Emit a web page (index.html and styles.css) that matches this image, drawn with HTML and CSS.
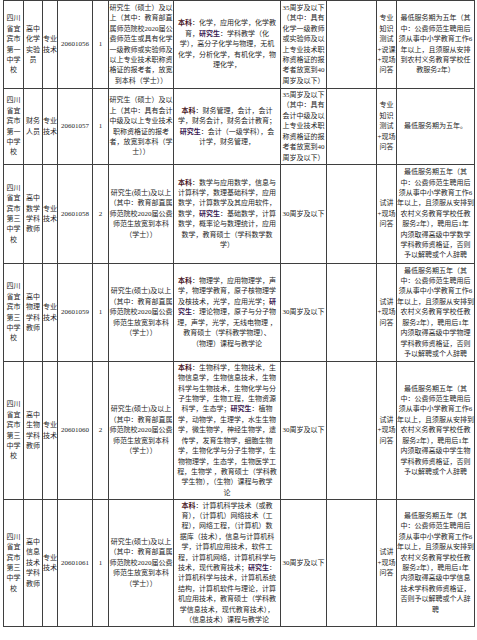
FILE: index.html
```html
<!DOCTYPE html>
<html lang="zh-CN">
<head>
<meta charset="utf-8">
<title>招聘岗位表</title>
<link rel="stylesheet" href="styles.css">
</head>
<body>
<table class="sheet">
<colgroup>
<col class="c-unit"><col class="c-post"><col class="c-type"><col class="c-code"><col class="c-num"><col class="c-edu"><col class="c-major"><col class="c-age"><col class="c-other"><col class="c-exam"><col class="c-note">
</colgroup>
<tbody>
<tr class="r1">
<td>四川<br>省宜<br>宾市<br>第一<br>中学<br>校</td>
<td>高中<br>化学<br>实验<br>员</td>
<td>专业<br>技术</td>
<td>20601056</td>
<td>1</td>
<td>研究生（硕士）及以<br>上（其中：教育部直<br>属师范院校2020届公<br>费师范生或具有化学<br>一级教师或实验师及<br>以上专业技术职称资<br>格证的报考者，放宽<br>到本科（学士））</td>
<td><b class="bk">本科</b>：化学，应用化学，化学教<br>育，<b class="yjs">研究生</b>：学科教学（化<br>学），高分子化学与物理，无机<br>化学，分析化学，有机化学，物<br>理化学，</td>
<td class="age">35周岁及以下<br>（其中：具有<br>化学一级教师<br>或实验师及以<br>上专业技术职<br>称资格证的报<br>考者放宽到40<br>周岁及以下）</td>
<td></td>
<td>专业<br>知识<br>测试<br>+说课<br>+现场<br>问答</td>
<td>最低服务期为五年（其<br>中：公费师范生聘用后<br>须从事中小学教育工作6<br>年以上，且须服从安排<br>到农村义务教育学校任<br>教服务2年）</td>
</tr>
<tr class="r2">
<td>四川<br>省宜<br>宾市<br>第一<br>中学<br>校</td>
<td>财务<br>人员</td>
<td>专业<br>技术</td>
<td>20601057</td>
<td>1</td>
<td>研究生（硕士）及以<br>上（其中：具有会计<br>中级及以上专业技术<br>职称资格证的报考<br>者，放宽到本科（学<br>士））</td>
<td><b class="bk">本科</b>：财务管理，会计，会计<br>学，财务会计，财务会计教育；<br><b class="yjs">研究生</b>：会计（一级学科），会<br>计学，财务管理，</td>
<td class="age">35周岁及以下<br>（其中：具有<br>会计中级及以<br>上专业技术职<br>称资格证的报<br>考者放宽到40<br>周岁及以下）</td>
<td></td>
<td>专业<br>知识<br>测试<br>+现场<br>问答</td>
<td>最低服务期为五年。</td>
</tr>
<tr class="r3">
<td>四川<br>省宜<br>宾市<br>第三<br>中学<br>校</td>
<td>高中<br>数学<br>学科<br>教师</td>
<td>专业<br>技术</td>
<td>20601058</td>
<td>2</td>
<td>研究生(硕士)及以上<br>（其中：教育部直属<br>师范院校2020届公费<br>师范生放宽到本科<br>（学士））</td>
<td><b class="bk">本科</b>：数学与应用数学，信息与<br>计算科学，数理基础科学，应用<br>数学，计算数学及其应用软件，<br>数学，<b class="yjs">研究生</b>：基础数学，计算<br>数学，概率论与数理统计，应用<br>数学，教育硕士（学科数学数<br>学）</td>
<td class="age">30周岁及以下</td>
<td></td>
<td>试讲<br>+现场<br>问答</td>
<td>最低服务期五年（其<br>中：公费师范生聘用后<br>须从事中小学教育工作6<br>年以上，且须服从安排到<br>农村义务教育学校任教<br>服务2年），聘用后1年<br>内须取得高级中学数学<br>学科教师资格证，否则<br>予以解聘或个人辞聘</td>
</tr>
<tr class="r4">
<td>四川<br>省宜<br>宾市<br>第三<br>中学<br>校</td>
<td>高中<br>物理<br>学科<br>教师</td>
<td>专业<br>技术</td>
<td>20601059</td>
<td>1</td>
<td>研究生(硕士)及以上<br>（其中：教育部直属<br>师范院校2020届公费<br>师范生放宽到本科<br>（学士））</td>
<td><b class="bk">本科</b>：物理学，应用物理学，声<br>学，物理学教育，原子核物理学<br>及核技术，光学，应用光学；<b class="yjs">研</b><br><b class="yjs">究生</b>：理论物理，原子与分子物<br>理，声学，光学，无线电物理 ，<br>教育硕士（学科教学物理）、<br>（物理）课程与教学论</td>
<td class="age">30周岁及以下</td>
<td></td>
<td>试讲<br>+现场<br>问答</td>
<td>最低服务期五年（其<br>中：公费师范生聘用后<br>须从事中小学教育工作6<br>年以上，且须服从安排到<br>农村义务教育学校任教<br>服务2年），聘用后1年<br>内须取得高级中学物理<br>学科教师资格证，否则<br>予以解聘或个人辞聘</td>
</tr>
<tr class="r5">
<td>四川<br>省宜<br>宾市<br>第三<br>中学<br>校</td>
<td>高中<br>生物<br>学科<br>教师</td>
<td>专业<br>技术</td>
<td>20601060</td>
<td>2</td>
<td>研究生(硕士)及以上<br>（其中：教育部直属<br>师范院校2020届公费<br>师范生放宽到本科<br>（学士））</td>
<td><b class="bk">本科</b>：生物科学，生物技术，生<br>物信息学，生物信息技术，生物<br>科学与生物技术，生物化学与分<br>子生物学，生物工程，生物资源<br>科学，生态学；<b class="yjs">研究生</b>：植物<br>学，动物学，生理学，水生生物<br>学，微生物学，神经生物学，遗<br>传学，发育生物学，细胞生物<br>学，生物化学与分子生物学，生<br>物物理学，生态学，生物医学工<br>程，生物学 ，教育硕士（学科教<br>学生物），（生物）课程与教学<br>论</td>
<td class="age">30周岁及以下</td>
<td></td>
<td>试讲<br>+现场<br>问答</td>
<td>最低服务期五年（其<br>中：公费师范生聘用后<br>须从事中小学教育工作6<br>年以上，且须服从安排到<br>农村义务教育学校任教<br>服务2年），聘用后1年<br>内须取得高级中学生物<br>学科教师资格证，否则<br>予以解聘或个人辞聘</td>
</tr>
<tr class="r6">
<td>四川<br>省宜<br>宾市<br>第三<br>中学<br>校</td>
<td>高中<br>信息<br>技术<br>学科<br>教师</td>
<td>专业<br>技术</td>
<td>20601061</td>
<td>1</td>
<td>研究生(硕士)及以上<br>（其中：教育部直属<br>师范院校2020届公费<br>师范生放宽到本科<br>（学士））</td>
<td><b class="bk">本科</b>：计算机科学技术（或教<br>育），（计算机）网络技术（工<br>程），网络工程，（计算机）数<br>据库（技术），信息与计算机科<br>学，计算机应用技术，软件工<br>程，计算机网络，计算机科学与<br>技术，现代教育技术；<b class="yjs">研究生</b>：<br>计算机科学与技术，计算机系统<br>结构，计算机软件与理论，计算<br>机应用技术，教育硕士（学科教<br>学信息技术，现代教育技术），<br>（信息技术）课程与教学论</td>
<td class="age">30周岁及以下</td>
<td></td>
<td>试讲<br>+现场<br>问答</td>
<td>最低服务期五年（其<br>中：公费师范生聘用后<br>须从事中小学教育工作6<br>年以上，且须服从安排到<br>农村义务教育学校任教<br>服务2年），聘用后1年<br>内须取得高级中学信息<br>技术学科教师资格证，<br>否则予以解聘或个人辞<br>聘</td>
</tr>
</tbody>
</table>
</body>
</html>
```
FILE: styles.css
```css
html, body {
  margin: 0;
  padding: 0;
  background: #ffffff;
}

body {
  font-family: "Liberation Serif", "Noto Sans CJK SC", serif;
  font-size: 7px;
  color: #262626;
}

.sheet {
  margin-left: 3px;
  width: 471px;
  border-collapse: collapse;
  table-layout: fixed;
}

.sheet td {
  border: 1px solid #3f3f3f;
  padding: 0;
  text-align: center;
  vertical-align: middle;
  line-height: 10.4px;
  white-space: nowrap;
  overflow: visible;
}

.c-unit { width: 20px; }
.c-post { width: 19px; }
.c-type { width: 15px; }
.c-code { width: 35px; }
.c-num { width: 16px; }
.c-edu { width: 65px; }
.c-major { width: 107px; }
.c-age { width: 46px; }
.c-other { width: 50px; }
.c-exam { width: 20px; }
.c-note { width: 78px; }

.r1 { height: 88px; }
.r2 { height: 76px; }
.r3 { height: 99px; }
.r4 { height: 98px; }
.r5 { height: 138px; }
.r6 { height: 127px; }

.bk {
  font-weight: bold;
  color: #4a1626;
}

.yjs {
  font-weight: bold;
  color: #3a1a52;
}
```
